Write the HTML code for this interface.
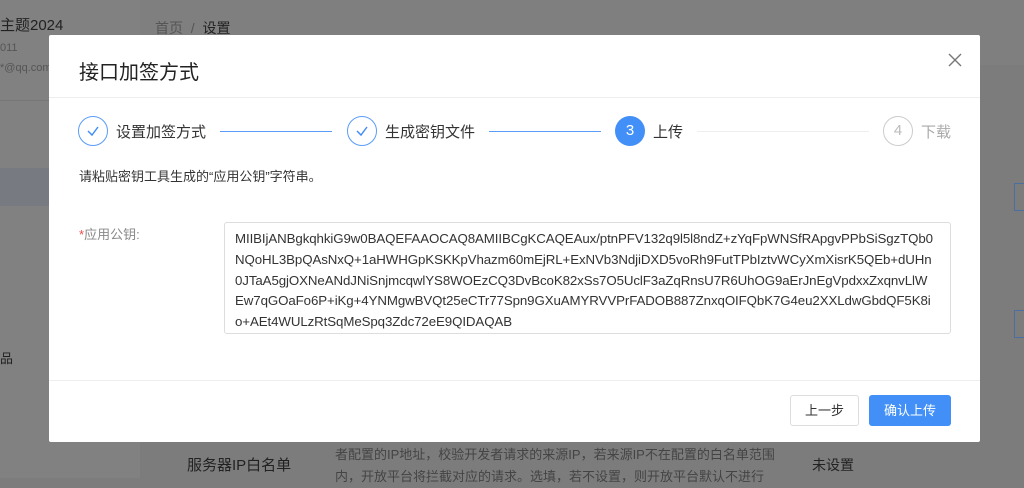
<!DOCTYPE html>
<html><head><meta charset="utf-8"><style>
*{margin:0;padding:0;box-sizing:border-box}
body{width:1024px;height:478px;overflow:hidden;background:#7c7c7c;font-family:"Liberation Sans","Noto Sans CJK SC",sans-serif;position:relative;color:#333}
.a{position:absolute}
.t div{white-space:nowrap}
</style></head><body>
<div class="a" style="left:0;top:0;width:140px;height:478px;background:#818181"></div>
<div class="a" style="left:140px;top:0;width:884px;height:65px;background:#7f7f7f"></div>
<div class="a" style="left:0;top:100px;width:140px;height:1px;background:#767676"></div>
<div class="a" style="left:0;top:168px;width:140px;height:38px;background:#777a80"></div>
<div class="a" style="left:0;top:14px;font-size:15px;color:#222">主题2024</div>
<div class="a" style="left:0;top:42px;font-size:11px;color:#555">011</div>
<div class="a" style="left:0;top:62px;font-size:11px;color:#555">*@qq.com</div>
<div class="a" style="left:0;top:348px;font-size:13px;color:#222">品</div>
<div class="a" style="left:155px;top:18px;font-size:14px;color:#555">首页 &nbsp;/&nbsp; <span style="color:#222">设置</span></div>
<div class="a" style="left:187px;top:454px;font-size:15px;color:#222">服务器IP白名单</div>
<div class="a" style="left:335px;top:444px;font-size:13px;color:#444;line-height:22px">者配置的IP地址，校验开发者请求的来源IP，若来源IP不在配置的白名单范围<br>内，开放平台将拦截对应的请求。选填，若不设置，则开放平台默认不进行</div>
<div class="a" style="left:812px;top:455px;font-size:14px;color:#222">未设置</div>
<div class="a" style="left:1014px;top:183px;width:12px;height:28px;border:1px solid #4a6fa0"></div>
<div class="a" style="left:1014px;top:310px;width:12px;height:28px;border:1px solid #4a6fa0"></div>

<div class="a" style="left:49px;top:35px;width:931px;height:407px;background:#fff;border-radius:2px">
 <div class="a" style="left:30px;top:21px;font-size:20px;color:#222">接口加签方式</div>
 <svg class="a" style="left:899px;top:18px" width="14" height="14"><path d="M1 1L13 13M13 1L1 13" stroke="#777" stroke-width="1.4"/></svg>
 <div class="a" style="left:0;top:62px;width:931px;height:1px;background:#eee"></div>
 <div class="a" style="left:29px;top:81px;width:30px;height:30px;border:1px solid #5a9cf8;border-radius:50%"></div>
 <svg class="a" style="left:36px;top:88px" width="16" height="16"><path d="M3 8L7 12L13 4" fill="none" stroke="#3d8bf5" stroke-width="1.4"/></svg>
 <div class="a" style="left:67px;top:86px;font-size:15px;color:#333">设置加签方式</div>
 <div class="a" style="left:171px;top:96px;width:112px;height:1px;background:#5a9cf8"></div>
 <div class="a" style="left:298px;top:81px;width:30px;height:30px;border:1px solid #5a9cf8;border-radius:50%"></div>
 <svg class="a" style="left:305px;top:88px" width="16" height="16"><path d="M3 8L7 12L13 4" fill="none" stroke="#3d8bf5" stroke-width="1.4"/></svg>
 <div class="a" style="left:336px;top:86px;font-size:15px;color:#333">生成密钥文件</div>
 <div class="a" style="left:440px;top:96px;width:112px;height:1px;background:#5a9cf8"></div>
 <div class="a" style="left:566px;top:81px;width:30px;height:30px;background:#4290f7;border-radius:50%;color:#fff;font-size:15px;text-align:center;line-height:30px">3</div>
 <div class="a" style="left:604px;top:86px;font-size:15px;color:#333">上传</div>
 <div class="a" style="left:648px;top:96px;width:172px;height:1px;background:#eee"></div>
 <div class="a" style="left:834px;top:81px;width:30px;height:30px;border:1px solid #ccc;border-radius:50%;color:#bbb;font-size:15px;text-align:center;line-height:28px">4</div>
 <div class="a" style="left:872px;top:86px;font-size:15px;color:#aaa">下载</div>
 <div class="a" style="left:30px;top:131px;font-size:13px;color:#333">请粘贴密钥工具生成的“应用公钥”字符串。</div>
 <div class="a" style="left:30px;top:189px;font-size:13px;color:#888"><span style="color:#f04a4a">*</span>应用公钥:</div>
 <div class="a t" style="left:175px;top:187px;width:727px;height:112px;border:1px solid #ddd;border-radius:3px;padding:6px 10px;font-size:13.3px;line-height:20.8px;color:#333;letter-spacing:-0.1px">
<div>MIIBIjANBgkqhkiG9w0BAQEFAAOCAQ8AMIIBCgKCAQEAux/ptnPFV132q9l5l8ndZ+zYqFpWNSfRApgvPPbSiSgzTQb0</div>
<div>NQoHL3BpQAsNxQ+1aHWHGpKSKKpVhazm60mEjRL+ExNVb3NdjiDXD5voRh9FutTPbIztvWCyXmXisrK5QEb+dUHn</div>
<div>0JTaA5gjOXNeANdJNiSnjmcqwlYS8WOEzCQ3DvBcoK82xSs7O5UclF3aZqRnsU7R6UhOG9aErJnEgVpdxxZxqnvLlW</div>
<div>Ew7qGOaFo6P+iKg+4YNMgwBVQt25eCTr77Spn9GXuAMYRVVPrFADOB887ZnxqOIFQbK7G4eu2XXLdwGbdQF5K8i</div>
<div>o+AEt4WULzRtSqMeSpq3Zdc72eE9QIDAQAB</div>
 </div>
 <div class="a" style="left:0;top:345px;width:931px;height:1px;background:#eee"></div>
 <div class="a" style="left:741px;top:360px;width:69px;height:31px;border:1px solid #ddd;border-radius:3px;font-size:13px;text-align:center;line-height:29px;color:#333">上一步</div>
 <div class="a" style="left:820px;top:360px;width:82px;height:31px;background:#4290f7;border-radius:3px;font-size:13px;text-align:center;line-height:31px;color:#fff">确认上传</div>
</div>
</body></html>
